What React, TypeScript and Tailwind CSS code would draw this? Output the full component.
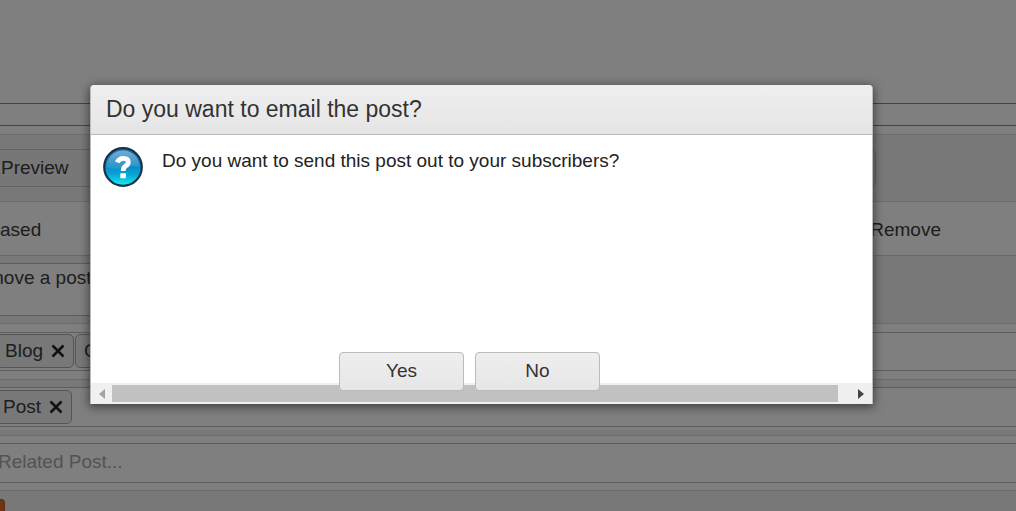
import type { ReactNode } from "react";

function Cross() {
  return (
    <svg viewBox="0 0 14 14" className="size-3.5" aria-hidden="true">
      <path d="M1.500 1.500 L12.500 12.500 M12.500 1.500 L1.500 12.500" stroke="#222" strokeWidth="2.5" fill="none" />
    </svg>
  );
}

function Tag({ children }: { children: ReactNode }) {
  return (
    <span className="flex h-[34px] items-center gap-2 rounded-[5px] border border-[#aaa] bg-[#f0f0f0] px-2">
      {children}
    </span>
  );
}

function QuestionIcon() {
  return (
    <svg viewBox="0 0 40 40" className="size-10 shrink-0" role="img" aria-label="Question">
      <defs>
        <linearGradient id="ball" x1="0" y1="0" x2="0" y2="1">
          <stop offset="0" stopColor="#1f6fae" />
          <stop offset="0.45" stopColor="#0d86c2" />
          <stop offset="0.7" stopColor="#06a6d6" />
          <stop offset="1" stopColor="#16f2f2" />
        </linearGradient>
        <linearGradient id="gloss" x1="0" y1="0" x2="0" y2="1">
          <stop offset="0" stopColor="#fff" stopOpacity="0.4" />
          <stop offset="1" stopColor="#fff" stopOpacity="0.08" />
        </linearGradient>
      </defs>
      <circle cx="20" cy="20" r="18.800" fill="url(#ball)" stroke="#173246" strokeWidth="2.2" />
      <path d="M3.500 20 A16.500 16.500 0 0 1 36.500 20 Q28 18 20 20.500 Q11 23.500 3.500 20Z" fill="url(#gloss)" />
      <path
        d="M14.200 15.400 Q16 11.300 20.300 11.300 Q25.300 11.300 25.300 15.200 Q25.300 17.400 22.600 19 Q20.200 20.500 20.200 24"
        fill="none"
        stroke="#fff"
        strokeWidth="4.8"
      />
      <rect x="17.300" y="26.200" width="5.600" height="5" rx="0.600" fill="#fff" />
    </svg>
  );
}

function DialogButton({ children }: { children: ReactNode }) {
  return (
    <button
      type="button"
      className="h-[39px] w-[125px] rounded-[4px] border border-[#bbb] bg-linear-to-b from-[#eee] to-[#e6e6e6] pb-0.5 text-[19px] leading-6 text-[#333]"
    >
      {children}
    </button>
  );
}

function PostEditor() {
  return (
    <main className="flex flex-col bg-white text-[19px] leading-6 text-[#3c3c3c]">
      <div className="h-[103px]" />
      <div className="h-[23px] border-y border-[#888]" />
      <div className="h-2" />
      <div className="h-[67px] border-t border-[#dedede] bg-[#f1f1f1] pt-3.5 pr-[140px]">
        <button
          type="button"
          className="h-[38px] w-full rounded-r-[5px] border border-l-0 border-[#c4c4c4] bg-[#eee] pl-px text-left"
        >
          Preview
        </button>
      </div>
      <div className="flex h-[54px] items-center justify-between border-t border-[#dcdcdc] pt-0.5 pr-[75px]">
        <span>ased</span>
        <span>Remove</span>
      </div>
      <div className="h-[68px] border-t border-[#d0d0d0] bg-[#f1f1f1] pt-[7px] pr-[160px]">
        <div className="h-[53px] border-y border-[#bbb] bg-white pt-0.5">
          <p className="-ml-3">move a post</p>
        </div>
      </div>
      <div className="h-14 border-t border-[#d6d6d6] pt-2">
        <div className="flex h-[39px] items-start border-y border-[#bbb] pt-px">
          <div className="-ml-1 flex gap-px">
            <Tag>
              Blog
              <button type="button" aria-label="Remove Blog"><Cross /></button>
            </Tag>
            <Tag>C</Tag>
          </div>
        </div>
      </div>
      <div className="h-2 border-t border-[#d6d6d6] bg-[#f1f1f1]" />
      <div className="flex h-10 items-center border-y border-[#bbb]">
        <div className="-ml-1.5 flex">
          <Tag>
            Post
            <button type="button" aria-label="Remove Post"><Cross /></button>
          </Tag>
        </div>
      </div>
      <div className="h-[3px]" />
      <div className="h-[5px] bg-[#f1f1f1]" />
      <div className="h-[55px] border-t border-[#d6d6d6] pt-[7px]">
        <div className="h-10 border-y border-[#bbb]">
          <input
            type="text"
            aria-label="Related Post"
            placeholder="Related Post..."
            className="-ml-0.5 block h-9 w-full placeholder:text-[#a6a6a6]"
          />
        </div>
      </div>
      <div className="h-[21px] overflow-hidden border-t border-[#d6d6d6] bg-[#f1f1f1] pt-2">
        <button type="button" aria-label="Save" className="block h-8 w-[5px] rounded-tr-[4px] border-t border-r border-[#b9581c] bg-[#e06a20]" />
      </div>
    </main>
  );
}

function EmailDialog() {
  return (
    <div className="absolute inset-0 bg-black/50 pt-[85px] pr-[143px] pl-[90px]">
      <section
        role="dialog"
        aria-labelledby="dialog-title"
        className="rounded-t-[4px] border-x border-[#bbb] bg-white shadow-[0_2px_10px_1px_rgba(0,0,0,0.5)]"
      >
        <h1
          id="dialog-title"
          className="h-[50px] rounded-t-[4px] border-b border-[#bbb] bg-linear-to-b from-[#f0eff0] to-[#e6e5e6] pl-[15px] text-[23px] leading-[48px] text-[#333]"
        >
          Do you want to email the post?
        </h1>
        <div className="flex h-[217px] gap-[19px] pt-3 pl-3">
          <QuestionIcon />
          <p className="pt-0.5 text-[19px] leading-6 text-[#222]">
            Do you want to send this post out to your subscribers?
          </p>
        </div>
        <div className="relative z-10 -mb-2 flex justify-center gap-[11px] pr-6">
          <DialogButton>Yes</DialogButton>
          <DialogButton>No</DialogButton>
        </div>
        <div className="flex h-[21px] items-center justify-between bg-[#f0f0f0] px-2">
          <svg viewBox="0 0 6 10" className="h-2.5 w-1.5" aria-hidden="true">
            <path d="M6 0 L0 5 L6 10Z" fill="#a3a3a3" />
          </svg>
          <div className="mr-5 ml-[7px] h-[17px] flex-1 bg-[#c1c1c1]" />
          <svg viewBox="0 0 6 10" className="h-2.5 w-1.5" aria-hidden="true">
            <path d="M0 0 L6 5 L0 10Z" fill="#444" />
          </svg>
        </div>
      </section>
    </div>
  );
}

export default function App() {
  return (
    <div className="relative min-h-screen overflow-hidden font-['Liberation_Sans',Arial,sans-serif]">
      <PostEditor />
      <EmailDialog />
    </div>
  );
}
